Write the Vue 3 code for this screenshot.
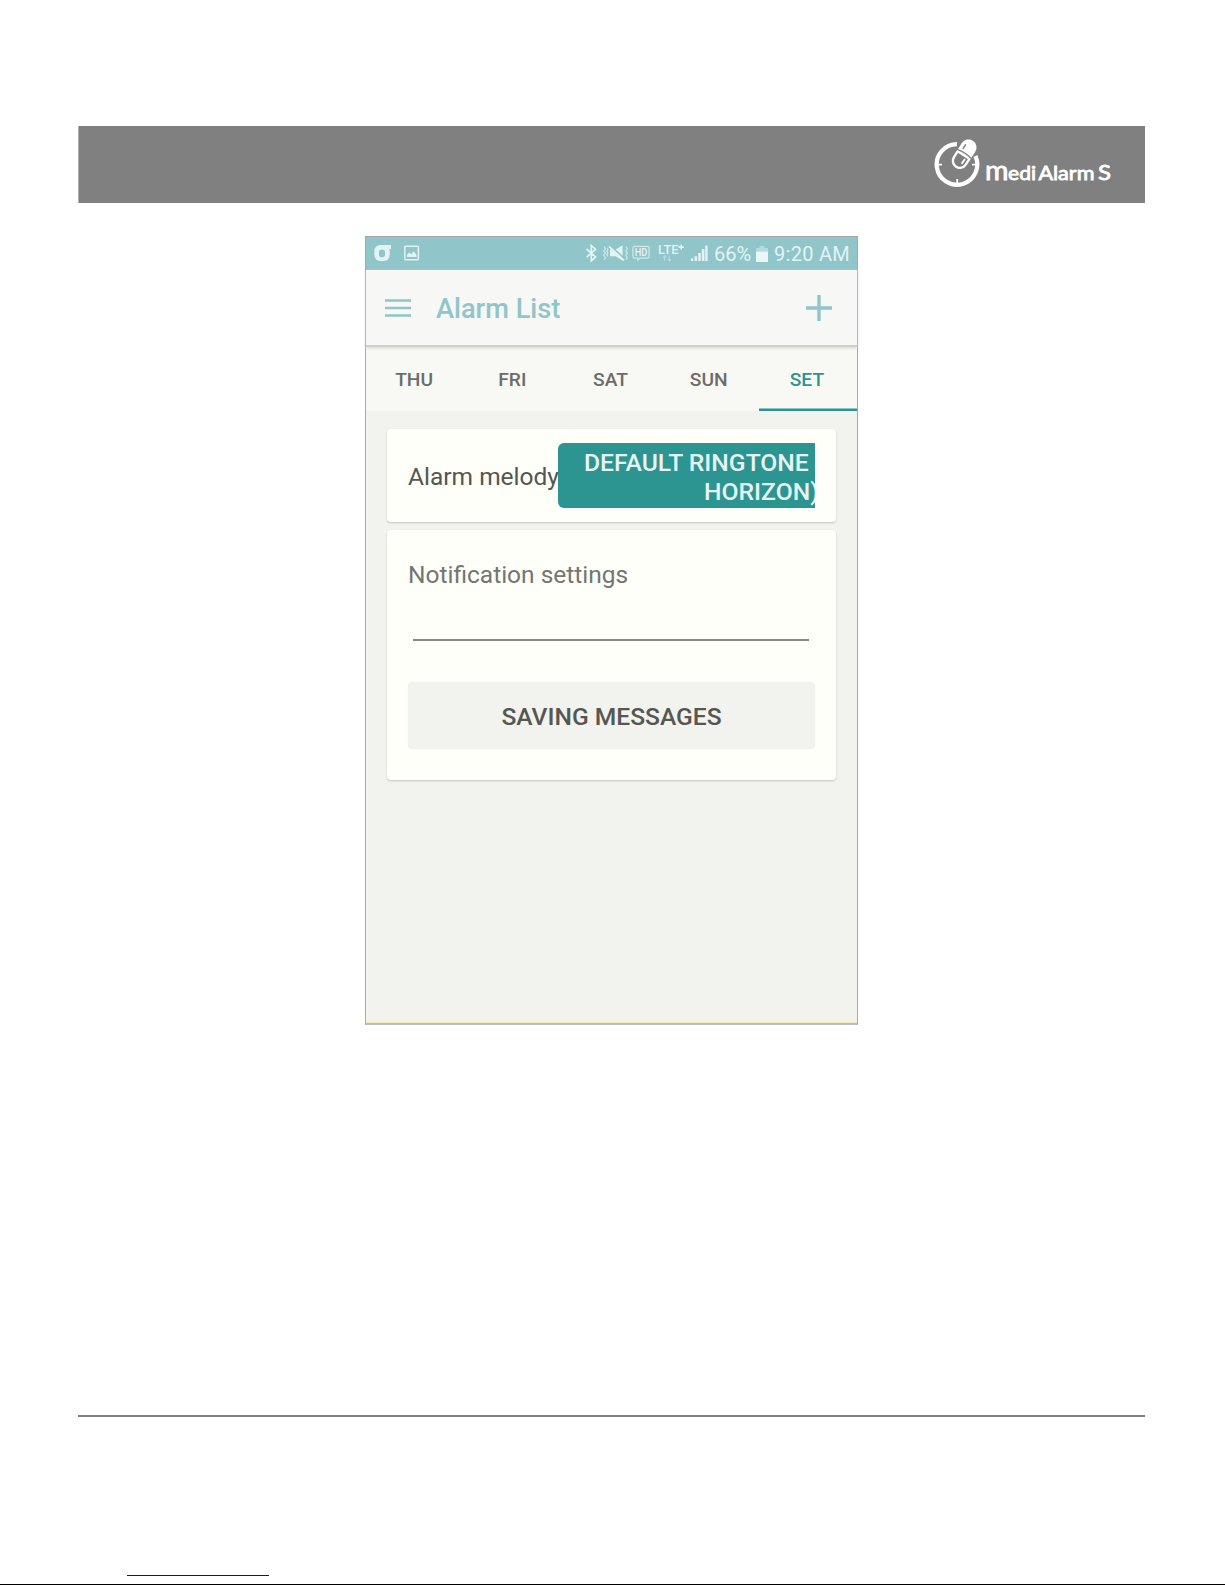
<script setup>
const tabs = ['THU', 'FRI', 'SAT', 'SUN', 'SET']
const active = 'SET'
</script>

<template>
  <div class="page">
    <header class="banner">
      <svg class="logo" width="184" height="60" viewBox="0 0 184 60" fill="none">
        <path d="M23 11.2A20.3 20.3 0 1 0 41.4 23" stroke="#fff" stroke-width="4.2" />
        <path d="M23.2 51v-5M3 31.6h5M38 31.6h5" stroke="#fff" stroke-width="1.8" />
        <g transform="translate(30.4 20.8) rotate(33)">
          <path d="M-8 0V-7.6a8 8 0 0 1 16 0V0Z" fill="#fff" />
          <path d="M-4 -3.6V-8.2" stroke="#808080" stroke-width="1.4" stroke-linecap="round" />
          <path d="M-7 1.4H7V8.4a7 7 0 0 1 -14 0Z" fill="#808080" stroke="#fff" stroke-width="2.4" stroke-linejoin="round" />
          <path d="M-8.4 .2Q0 -2 8.4 .2" stroke="#808080" stroke-width="1.2" />
          <path d="M3.2 4.6v4.6" stroke="#fff" stroke-width="1.8" stroke-linecap="round" />
        </g>
        <g class="wordmark">
          <text x="51" y="46.8" font-size="27" textLength="23.5" lengthAdjust="spacingAndGlyphs">m</text>
          <text x="74" y="46.8" font-size="19" textLength="28" lengthAdjust="spacingAndGlyphs">edi</text>
          <text x="104.4" y="46.8" font-size="19.4" textLength="56" lengthAdjust="spacingAndGlyphs">Alarm</text>
          <text x="164" y="46.8" font-size="22" textLength="13" lengthAdjust="spacingAndGlyphs">S</text>
        </g>
      </svg>
    </header>

    <main class="phone">
      <div class="status">
        <svg width="60" height="33" viewBox="0 0 60 33" fill="none">
          <path d="M25 8H14.5Q8.3 8 8.3 14.5v3q0 6.7 7.7 6.7t7.7-6.7v-3q0-1.4-.4-2.4H25ZM16 12.4q3 0 3 2.8v2.2q0 2.8-3 2.8t-3-2.8v-2.2q0-2.8 3-2.8Z" fill="#e3f3f5" fill-rule="evenodd" />
          <rect x="38.8" y="9.2" width="13.6" height="13.6" rx="1" stroke="#e3f3f5" stroke-width="1.5" />
          <path d="M41 20v-2.2l2.3-2.2 2 1.6 2.4-3 2.8 3.6V20Z" fill="#e3f3f5" />
        </svg>
        <svg class="signals" width="128" height="33" viewBox="0 0 128 33" fill="none">
          <path d="M3.6 12l9 8-4.3 3.8V8.6l4.3 3.6-9 8" stroke="#e3f3f5" stroke-width="1.7" />
          <g stroke="#cfe8eb" stroke-width="1.2">
            <path d="M21 9.5l1.4 2.2-1.7 2.2 1.7 2.2-1.7 2.2 1.7 2.2-1.4 2.2M24 11.2l.9 1.5-1.1 1.7 1.1 1.7-1.1 1.7 1 1.6M43 9.5l1.4 2.2-1.7 2.2 1.7 2.2-1.7 2.2 1.7 2.2-1.4 2.2" />
            <path d="M51.5 9.4h13q1.6 0 1.6 1.6v8.6q0 1.6-1.6 1.6h-7.6l-2.2 2v-2h-3.2q-1.6 0-1.6-1.6V11q0-1.6 1.6-1.6Z" />
          </g>
          <path d="M27 12.6h5.6l7-4.4v15.6l-7-4.6H27Z" fill="#e3f3f5" />
          <path d="M27 8.4 42 22.4" stroke="#90c5c9" stroke-width="2" />
          <path d="M26 9.4 41 23.4" stroke="#e3f3f5" stroke-width="1.8" />
          <text x="51.8" y="19" font-size="10.5" font-weight="500" textLength="12.6" lengthAdjust="spacingAndGlyphs">HD</text>
          <text x="75" y="17" font-size="13" font-weight="500" textLength="20.5" lengthAdjust="spacingAndGlyphs">LTE</text>
          <path d="M98.2 7.4v5.4M95.5 10.1h5.4" stroke="#e3f3f5" stroke-width="1.6" />
          <path d="M81.6 24v-5l-1.8 1.9M81.6 18.8l1.6 1.9M86.4 18.8v5l-1.7-1.8M86.4 24l1.7-1.9" stroke="#b5dade" stroke-width="1.2" />
          <path d="M107.8 24v-2.4h2.4V24ZM111.6 24v-4.8h2.5v4.8ZM115.2 24v-8h2.6v8ZM118.8 24V12h2.6v12ZM122.2 24V8.4h2.4V24Z" fill="#e3f3f5" />
        </svg>
        <span class="battery">66%</span>
        <svg class="cell" width="12" height="17" viewBox="0 0 12 17">
          <path d="M3.5 0h5v2H12v3.5H0V2h3.5Z" fill="#b5dade" />
          <path d="M0 5.5h12V16H0Z" fill="#e9f7f8" />
        </svg>
        <span class="clock">9:20 AM</span>
      </div>

      <div class="appbar">
        <svg width="26" height="18" viewBox="0 0 26 18"><path d="M0 1.4h26M0 8.9h26M0 16.4h26" stroke="#90c5c9" stroke-width="2.5" /></svg>
        <h1>Alarm List</h1>
        <svg class="plus" width="26" height="26" viewBox="0 0 26 26"><path d="M13 0v26M0 13h26" stroke="#90c5c9" stroke-width="3.4" /></svg>
      </div>

      <nav class="tabs">
        <span v-for="t in tabs" :key="t" class="tab" :class="{ on: t === active }">{{ t }}</span>
      </nav>

      <section class="card melody">
        <span class="label">Alarm melody</span>
        <div class="ringtone">
          <span class="first">DEFAULT RINGTONE</span>
          <span class="second">HORIZON)</span>
        </div>
      </section>

      <section class="card notify">
        <span class="label">Notification settings</span>
        <div class="field"></div>
        <div class="save">SAVING MESSAGES</div>
      </section>
    </main>

    <footer class="foot">
      <div class="link"></div>
    </footer>
  </div>
</template>

<style>
body { background: #fff; }
</style>

<style scoped>
* { box-sizing: border-box; }
.page {
  width: 1225px;
  height: 1585px;
  padding: 126px 80px 0 78px;
  display: flex;
  flex-direction: column;
  border-bottom: 1px solid #000;
  font-family: Roboto, "Liberation Sans", sans-serif;
  overflow: hidden;
}
.banner {
  height: 77px;
  flex: none;
  display: flex;
  justify-content: flex-end;
  padding: 7px 27px 0 0;
  background: #808080;
  border-left: 1px solid #b0b0b0;
}
.wordmark { fill: #fff; stroke: #fff; stroke-width: .8; font-family: Lato, sans-serif; }
.phone {
  width: 493px;
  height: 789px;
  flex: none;
  margin: 33px 0 0 287px;
  border: 1px solid #a9a9a9;
  border-bottom: 2px solid #bdbdbd;
  background: #f2f3ee;
  box-shadow: inset 0 -1px #f0ecb4;
}
.status {
  height: 33px;
  display: flex;
  background: #90c5c9;
  color: #e3f3f5;
  font-size: 20px;
  line-height: 34px;
  white-space: nowrap;
}
.signals { margin-left: 157px; }
.signals text { fill: #e3f3f5; }
.battery { margin-left: 3px; width: 38px; }
.cell { margin: 9px 6px 0 4px; }
.clock { letter-spacing: .3px; }
.appbar {
  position: relative;
  height: 77px;
  display: flex;
  align-items: center;
  padding: 0 25px 0 19px;
  background: #f7f7f5;
  border-bottom: 2px solid #cfd0ca;
  box-shadow: 0 1px 3px #d0d1cb;
}
h1 { margin: 2px 0 0 25px; font-size: 27.2px; font-weight: 500; color: #90c5c9; }
.plus { margin-left: auto; }
.tabs { height: 64px; display: flex; background: #f8f9f5; }
.tab {
  flex: 1;
  text-align: center;
  padding-right: 2px;
  line-height: 65px;
  font-size: 19.2px;
  font-weight: 500;
  color: #6c6c68;
}
.on { color: #2c9490; box-shadow: inset 0 -2.5px #2c9490; }
.card {
  margin-left: 21px;
  width: 449px;
  background: #fefff9;
  border-radius: 4px;
  box-shadow: 0 1px 2px #c4c5bf;
}
.melody {
  margin-top: 18px;
  height: 93px;
  display: flex;
  padding: 14px 21px;
}
.label { font-size: 24.5px; color: #555551; white-space: nowrap; }
.melody .label { width: 150px; line-height: 68px; }
.ringtone {
  width: 257px;
  height: 65px;
  overflow: hidden;
  border-radius: 6px 0 0 6px;
  background: #2c9592;
  color: #e5f4f3;
  font-size: 24.7px;
  font-weight: 500;
  line-height: 29px;
  padding-top: 5px;
  display: flex;
  flex-direction: column;
  align-items: flex-start;
  white-space: nowrap;
}
.first { margin-left: 26px; }
.second { margin-left: 146px; }
.notify {
  margin-top: 8px;
  height: 250px;
  padding: 30px 21px 0;
  display: flex;
  flex-direction: column;
}
.notify .label { color: #757571; line-height: 30px; }
.field { margin: 49px 6px 0 5px; height: 2px; background: #858783; }
.save {
  margin-top: 41px;
  height: 67px;
  border-radius: 5px;
  background: #f2f3ee;
  box-shadow: 0 0 1px #dedfd9;
  text-align: center;
  line-height: 70px;
  font-size: 24.6px;
  font-weight: 500;
  color: #565652;
}
.foot { margin-top: 390px; height: 162px; flex: none; border-top: 2px solid #808080; }
.link { width: 142px; height: 1px; margin: 158px 0 0 49px; background: #00f; }
</style>
